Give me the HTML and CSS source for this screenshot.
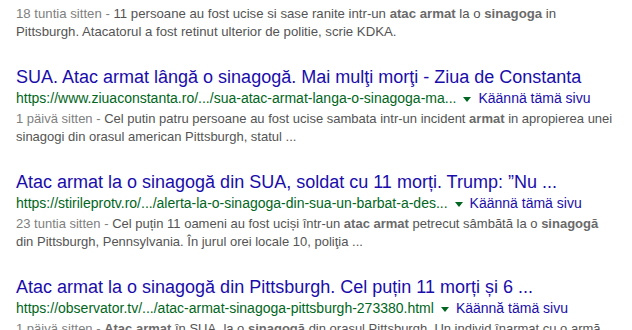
FILE: index.html
```html
<!DOCTYPE html>
<html>
<head>
<meta charset="utf-8">
<link rel="stylesheet" href="styles.css">
</head>
<body>
<div class="results">
  <div class="result first">
    <div class="snippet large"><span class="date">18 tuntia sitten - </span>11 persoane au fost ucise si sase ranite intr-un <b>atac armat</b> la o <b>sinagoga</b> in Pittsburgh. Atacatorul a fost retinut ulterior de politie, scrie KDKA.</div>
  </div>
  <div class="result">
    <h3 class="title">SUA. Atac armat lângă o sinagogă. Mai mulţi morţi - Ziua de Constanta</h3>
    <div class="url"><cite>https://www.ziuaconstanta.ro/.../sua-atac-armat-langa-o-sinagoga-ma...</cite><span class="arrow"></span><span class="translate">Käännä tämä sivu</span></div>
    <div class="snippet"><span class="date">1 päivä sitten - </span>Cel putin patru persoane au fost ucise sambata intr-un incident <b>armat</b> in apropierea unei sinagogi din orasul american Pittsburgh, statul ...</div>
  </div>
  <div class="result">
    <h3 class="title">Atac armat la o sinagogă din SUA, soldat cu 11 morți. Trump: ”Nu ...</h3>
    <div class="url"><cite>https://stirileprotv.ro/.../alerta-la-o-sinagoga-din-sua-un-barbat-a-des...</cite><span class="arrow"></span><span class="translate">Käännä tämä sivu</span></div>
    <div class="snippet"><span class="date">23 tuntia sitten - </span>Cel puțin 11 oameni au fost uciși într-un <b>atac armat</b> petrecut sâmbătă la o <b>sinagogă</b> din Pittsburgh, Pennsylvania. În jurul orei locale 10, poliţia ...</div>
  </div>
  <div class="result">
    <h3 class="title">Atac armat la o sinagogă din Pittsburgh. Cel puțin 11 morți și 6 ...</h3>
    <div class="url"><cite>https://observator.tv/.../atac-armat-sinagoga-pittsburgh-273380.html</cite><span class="arrow"></span><span class="translate">Käännă tämä sivu</span></div>
    <div class="snippet"><span class="date">1 päivä sitten - </span><b>Atac armat</b> în SUA, la o <b>sinagogă</b> din orasul Pittsburgh. Un individ înarmat cu o armă ...</div>
  </div>
</div>
</body>
</html>
```
FILE: styles.css
```css
html, body {
  margin: 0;
  padding: 0;
  background: #fff;
}
body {
  font-family: "Liberation Sans", Arial, sans-serif;
  overflow: hidden;
}
.results {
  padding: 5px 0 0 16px;
  width: 600px;
}
.result {
  margin-bottom: 24px;
}
.title {
  margin: 0;
  font-size: 18px;
  font-weight: normal;
  line-height: 24px;
  color: #1a0dab;
  white-space: nowrap;
}
.url {
  display: flex;
  align-items: center;
  height: 19px;
  font-size: 14px;
  line-height: 19px;
  margin-bottom: 2px;
  white-space: nowrap;
}
.url cite {
  font-style: normal;
  color: #006621;
}
.arrow {
  display: inline-block;
  width: 0;
  height: 0;
  border-left: 4px solid transparent;
  border-right: 4px solid transparent;
  border-top: 5px solid #006621;
  margin: 2px 7px 0 7px;
}
.translate {
  color: #1a0dab;
}
.snippet {
  font-size: 13px;
  line-height: 18px;
  color: #545454;
}
.snippet.large {
  font-size: 13.2px;
}
.snippet .date {
  color: #808080;
}
.snippet b {
  color: #6a6a6a;
}
```
